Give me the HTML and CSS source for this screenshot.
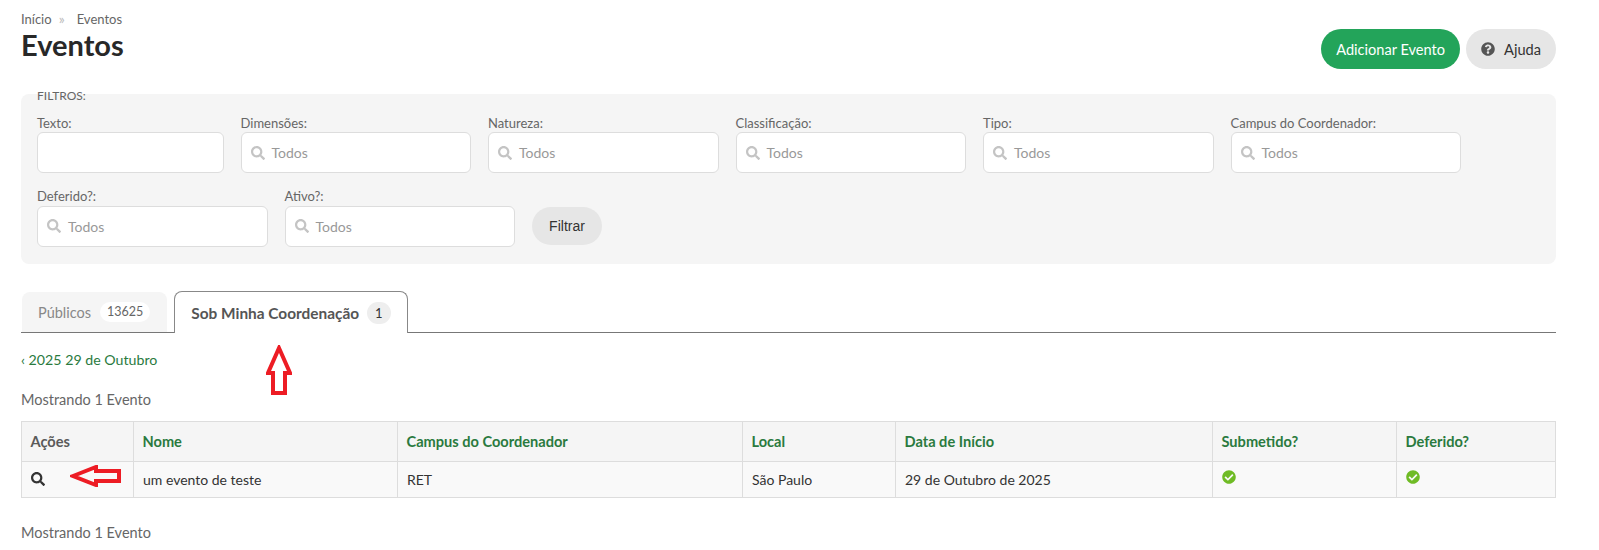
FILE: index.html
```html
<!DOCTYPE html>
<html lang="pt-BR">

<head>
    <meta charset="UTF-8">
    <title>Eventos</title>
    <link rel="stylesheet" href="styles.css">
</head>

<body>
    <svg class="sprites" xmlns="http://www.w3.org/2000/svg">
        <symbol id="i-search" viewBox="0 0 512 512"><path d="M505 442.7L405.3 343c-4.5-4.5-10.6-7-17-7H372c27.6-35.3 44-79.7 44-128C416 93.1 322.9 0 208 0S0 93.1 0 208s93.1 208 208 208c48.3 0 92.7-16.4 128-44v16.3c0 6.4 2.5 12.5 7 17l99.7 99.7c9.4 9.4 24.6 9.4 33.9 0l28.3-28.3c9.4-9.4 9.4-24.6.1-34zM208 336c-70.7 0-128-57.2-128-128 0-70.7 57.2-128 128-128 70.7 0 128 57.2 128 128 0 70.7-57.2 128-128 128z"/></symbol>
        <symbol id="i-help" viewBox="0 0 512 512"><path d="M504 256c0 136.997-111.043 248-248 248S8 392.997 8 256C8 119.083 119.043 8 256 8s248 111.083 248 248zM262.655 90c-54.497 0-89.255 22.957-116.549 63.758-3.536 5.286-2.353 12.415 2.715 16.258l34.699 26.31c5.205 3.947 12.621 3.008 16.665-2.122 17.864-22.658 30.113-35.797 57.303-35.797 20.429 0 45.698 13.148 45.698 32.958 0 14.976-12.363 22.667-32.534 33.976C247.128 238.528 216 254.941 216 296v4c0 6.627 5.373 12 12 12h56c6.627 0 12-5.373 12-12v-1.333c0-28.462 83.186-29.647 83.186-106.667 0-58.002-60.165-102-116.531-102zM256 338c-25.365 0-46 20.635-46 46 0 25.364 20.635 46 46 46s46-20.636 46-46c0-25.365-20.635-46-46-46z"/></symbol>
        <symbol id="i-check" viewBox="0 0 512 512"><path d="M504 256c0 136.967-111.033 248-248 248S8 392.967 8 256 119.033 8 256 8s248 111.033 248 248zM227.314 387.314l184-184c6.248-6.248 6.248-16.379 0-22.627l-22.627-22.627c-6.248-6.249-16.379-6.249-22.628 0L216 308.118l-70.059-70.059c-6.248-6.248-16.379-6.248-22.628 0l-22.627 22.627c-6.248 6.248-6.248 16.379 0 22.627l104 104c6.249 6.249 16.379 6.249 22.628.001z"/></symbol>
    </svg>

    <div class="page">
        <div class="breadcrumb">
            <span>Início</span>
            <span class="sep">»</span>
            <span>Eventos</span>
        </div>

        <div class="title-bar">
            <h1>Eventos</h1>
            <div class="actions">
                <a href="#" class="btn btn-success">Adicionar Evento</a>
                <a href="#" class="btn btn-default">
                    <svg class="icon-help"><use href="#i-help"></use></svg>
                    Ajuda
                </a>
            </div>
        </div>

        <!-- filtros -->
        <fieldset class="filters">
            <legend>FILTROS:</legend>
            <div class="filter-row">
                <div class="field field-text">
                    <label>Texto:</label>
                    <div class="input"></div>
                </div>
                <div class="field">
                    <label>Dimensões:</label>
                    <div class="input"><svg class="icon-search"><use href="#i-search"></use></svg>Todos</div>
                </div>
                <div class="field">
                    <label>Natureza:</label>
                    <div class="input"><svg class="icon-search"><use href="#i-search"></use></svg>Todos</div>
                </div>
                <div class="field">
                    <label>Classificação:</label>
                    <div class="input"><svg class="icon-search"><use href="#i-search"></use></svg>Todos</div>
                </div>
                <div class="field">
                    <label>Tipo:</label>
                    <div class="input"><svg class="icon-search"><use href="#i-search"></use></svg>Todos</div>
                </div>
                <div class="field">
                    <label>Campus do Coordenador:</label>
                    <div class="input"><svg class="icon-search"><use href="#i-search"></use></svg>Todos</div>
                </div>
            </div>
            <div class="filter-row">
                <div class="field">
                    <label>Deferido?:</label>
                    <div class="input"><svg class="icon-search"><use href="#i-search"></use></svg>Todos</div>
                </div>
                <div class="field">
                    <label>Ativo?:</label>
                    <div class="input"><svg class="icon-search"><use href="#i-search"></use></svg>Todos</div>
                </div>
                <button class="btn-filter">Filtrar</button>
            </div>
        </fieldset>

        <!-- abas -->
        <ul class="tabs">
            <li class="tab">Públicos <span class="count">13625</span></li>
            <li class="tab active">Sob Minha Coordenação <span class="count">1</span></li>
        </ul>

        <p class="date-link"><a href="#">‹ 2025 29 de Outubro</a></p>
        <p class="total">Mostrando 1 Evento</p>

        <table class="list">
            <colgroup>
                <col class="c-acoes">
                <col class="c-nome">
                <col class="c-campus">
                <col class="c-local">
                <col class="c-data">
                <col class="c-sub">
                <col>
            </colgroup>
            <thead>
                <tr>
                    <th class="plain">Ações</th>
                    <th>Nome</th>
                    <th>Campus do Coordenador</th>
                    <th>Local</th>
                    <th>Data de Início</th>
                    <th>Submetido?</th>
                    <th>Deferido?</th>
                </tr>
            </thead>
            <tbody>
                <tr>
                    <td><svg class="icon-view"><use href="#i-search"></use></svg></td>
                    <td>um evento de teste</td>
                    <td>RET</td>
                    <td>São Paulo</td>
                    <td>29 de Outubro de 2025</td>
                    <td><svg class="icon-check"><use href="#i-check"></use></svg></td>
                    <td><svg class="icon-check"><use href="#i-check"></use></svg></td>
                </tr>
            </tbody>
        </table>

        <p class="total total-bottom">Mostrando 1 Evento</p>
    </div>

    <!-- setas vermelhas por cima da tela -->
    <svg class="arrow arrow-up" viewBox="0 0 26 50"><path d="M13 3L24 28H19V48H7V28H2Z"/></svg>
    <svg class="arrow arrow-left" viewBox="0 0 51 22"><path d="M3 11L26 2V6H49V16H26V20Z"/></svg>
</body>

</html>
```

FILE: styles.css
```css
* {
    margin: 0;
    padding: 0;
    box-sizing: border-box;
}

ul {
    list-style: none;
}

a {
    text-decoration: none;
}

body {
    position: relative;
    height: 550px;
    overflow: hidden;
    background-color: #fff;
    color: #5a5a5a;
    font-family: "Lato", "Liberation Sans", sans-serif;
    font-size: 14px;
}

.sprites {
    display: none;
}

.page {
    width: 1556px;
    padding: 11px 0 0 21px;
}

.breadcrumb {
    display: flex;
    gap: 7px;
    height: 16px;
    font-size: 13px;
    line-height: 16px;
    color: #666;
}

.breadcrumb .sep {
    margin-right: 5px;
    color: #bbb;
    font-size: 14px;
}

.title-bar {
    display: flex;
    justify-content: space-between;
    height: 59px;
}

.title-bar h1 {
    font-size: 29px;
    line-height: 36px;
    font-weight: 700;
    color: #282828;
}

.actions {
    display: flex;
    gap: 6px;
    margin-top: 2px;
}

.btn {
    display: flex;
    align-items: center;
    height: 40px;
    padding: 0 15px;
    border-radius: 20px;
    font-size: 14.6px;
}

.btn-success {
    background-color: #23a45a;
    color: #fff;
}

.btn-default {
    gap: 9px;
    background-color: #e6e6e6;
    color: #333;
}

.icon-help {
    width: 14px;
    height: 14px;
    fill: #555;
}

.filters {
    height: 178px;
    padding: 0 16px;
    border: 0;
    border-radius: 8px;
    background-color: #f5f5f5;
}

.filters legend {
    padding-top: 4px;
    font-size: 12px;
    line-height: 12px;
    color: #666;
}

.filter-row {
    display: flex;
    align-items: flex-end;
    gap: 17px;
    margin-top: 14.75px;
}

.filter-row + .filter-row {
    margin-top: 17px;
}

.field {
    width: 230.5px;
}

.field-text {
    width: 186.5px;
}

.field label {
    display: block;
    height: 15.5px;
    font-size: 13px;
    line-height: 13px;
    color: #666;
}

.input {
    display: flex;
    align-items: center;
    gap: 7px;
    height: 41px;
    padding: 0 9px;
    border: 1px solid #ddd;
    border-radius: 6px;
    background-color: #fff;
    font-size: 14px;
    color: #999;
}

.icon-search {
    width: 14px;
    height: 14px;
    fill: #c4c4c4;
}

.btn-filter {
    width: 70px;
    height: 38px;
    margin-bottom: 2px;
    border: 0;
    border-radius: 19px;
    background-color: #e6e6e6;
    color: #333;
    font-family: "Liberation Sans", sans-serif;
    font-size: 14px;
}

.tabs {
    display: flex;
    gap: 7px;
    height: 42px;
    margin-top: 27px;
    padding-left: 1px;
    border-bottom: 1px solid #777;
}

.tab {
    display: flex;
    align-items: center;
    gap: 9px;
    height: 40px;
    margin-top: 1px;
    padding: 0 17px 0 16px;
    border-radius: 8px 8px 0 0;
    background-color: #f5f5f5;
    color: #888;
    font-size: 14.5px;
}

.tab .count {
    height: 20px;
    padding: 0 7px;
    border-radius: 10px;
    background-color: #fff;
    font-size: 12.5px;
    line-height: 20px;
    color: #666;
}

.tab.active {
    gap: 8px;
    height: 42px;
    margin-top: 0;
    padding: 0 16px;
    border: 1px solid #888;
    border-bottom: 0;
    background-color: #fff;
    color: #555;
    font-size: 15.4px;
    font-weight: 700;
}

.tab.active .count {
    height: 22px;
    padding: 0 8px;
    border-radius: 11px;
    background-color: #eee;
    font-size: 13px;
    line-height: 22px;
    color: #333;
    font-weight: 400;
}

.date-link {
    margin-top: 18px;
    font-size: 14.2px;
    line-height: 17px;
}

.date-link a {
    color: #2a7a3e;
}

.total {
    margin-top: 23px;
    font-size: 14.5px;
    line-height: 17px;
    color: #666;
}

.list {
    width: 100%;
    margin-top: 13px;
    border-collapse: collapse;
    table-layout: fixed;
}

.list th,
.list td {
    padding: 0 9px;
    border: 1px solid #ddd;
    text-align: left;
}

.list th {
    height: 40px;
    padding-left: 8.5px;
    background-color: #f5f5f5;
    color: #2a7a3e;
    font-size: 14.6px;
    font-weight: 700;
}

.list th.plain {
    color: #5a5a5a;
}

.list td {
    height: 36px;
    padding-bottom: 1px;
    background-color: #f9f9f9;
    color: #333;
}

.c-acoes {
    width: 112px;
}

.c-nome {
    width: 264px;
}

.c-campus {
    width: 345px;
}

.c-local {
    width: 153px;
}

.c-data {
    width: 317px;
}

.c-sub {
    width: 184px;
}

.icon-view {
    display: block;
    width: 14px;
    height: 14px;
    fill: #333;
}

.icon-check {
    display: block;
    width: 14px;
    height: 14px;
    margin-bottom: 4px;
    fill: #6fbb25;
}

.total-bottom {
    margin-top: 26px;
}

.arrow {
    position: absolute;
    fill: none;
    stroke: #ed1c24;
    stroke-width: 4;
}

.arrow-up {
    left: 266px;
    top: 345px;
    width: 26px;
    height: 50px;
}

.arrow-left {
    left: 70px;
    top: 465px;
    width: 51px;
    height: 22px;
}
```
